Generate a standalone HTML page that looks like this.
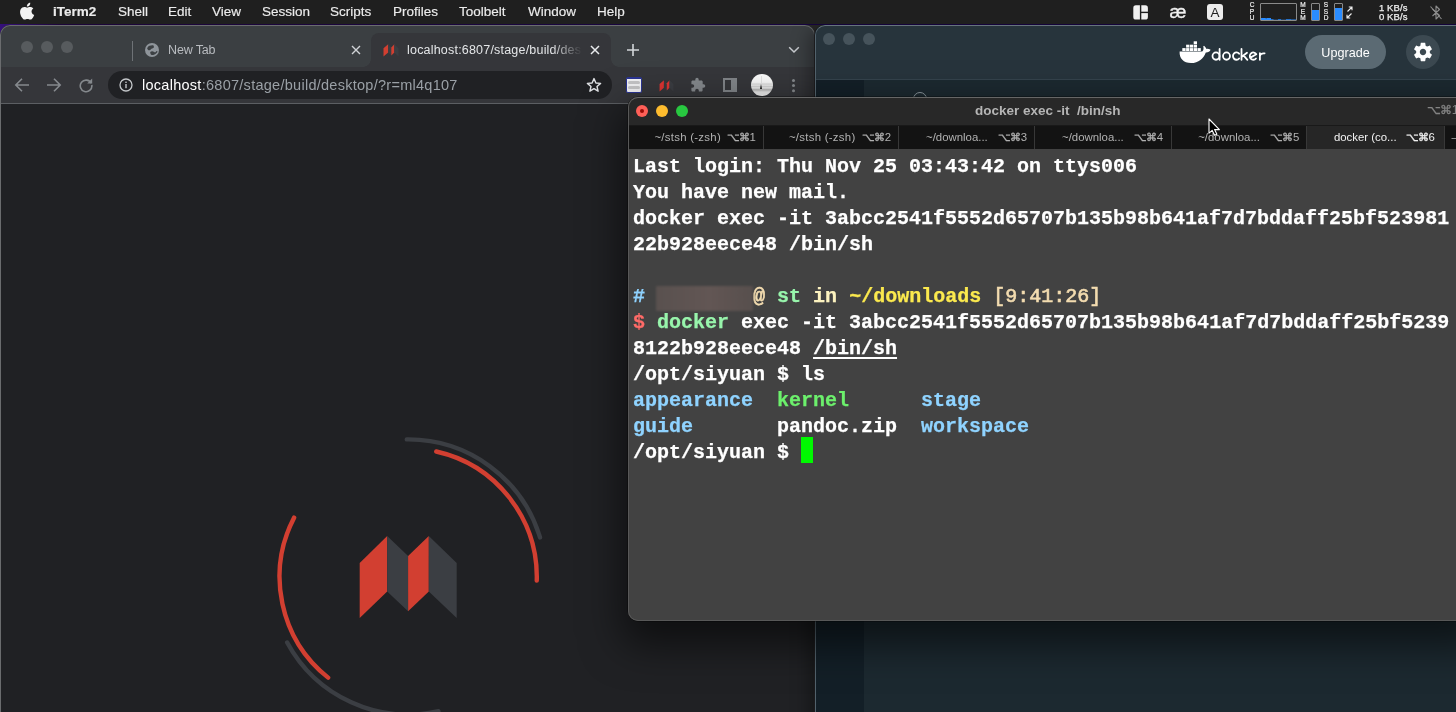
<!DOCTYPE html>
<html>
<head>
<meta charset="utf-8">
<title>screenshot</title>
<style>
*{box-sizing:border-box;margin:0;padding:0}
html,body{width:1456px;height:712px;overflow:hidden;background:#1c0740;font-family:"Liberation Sans",sans-serif;}
.abs{position:absolute}
#menubar,#chrome,#docker,#iterm .clip{will-change:transform}
#desk{position:absolute;left:0;top:0;width:1456px;height:712px;overflow:hidden;background:linear-gradient(90deg,#35107a 0px,#1c0638 60px,#170540 800px,#170540 1456px);}
/* menu bar */
#menubar{position:absolute;left:0;top:0;width:1456px;height:24px;background:#1f1f1f;color:#fff;font-size:13.5px;line-height:24px;white-space:nowrap;z-index:50}
#menubar .mi{position:absolute;top:0;height:24px;line-height:23px;color:#ececec;-webkit-text-stroke:0.150px #ececec}
.vlab{font-size:6.500px;line-height:6.600px;-webkit-text-stroke:0.200px #f0f0f0;color:#f0f0f0;width:10px;text-align:center}
/* chrome */
#chrome{position:absolute;left:0;top:25px;width:814.500px;height:700px;background:#3b3f42;border-radius:10px 10px 0 0;overflow:hidden;box-shadow:0 0 0 0 #000;z-index:1}
#chrome .rim{position:absolute;left:0;top:0;right:0;bottom:0;border-radius:10px 10px 0 0;border:1px solid #6a6c6e;border-bottom:none;z-index:9;pointer-events:none}
#tabstrip{position:absolute;left:0;top:0;width:815px;height:42px;background:#3b3f42}
#toolbar{position:absolute;left:0;top:42px;width:815px;height:36px;background:#35363a}
#tbline{position:absolute;left:0;top:78px;width:815px;height:1px;background:#5c5f63}
#page{position:absolute;left:0;top:79px;width:815px;height:640px;background:#202124}
.tl{position:absolute;width:12px;height:12px;border-radius:50%}
/* docker */
#docker{position:absolute;left:815px;top:25px;width:660px;height:700px;background:#1c2930;border-radius:10px 0 0 0;overflow:hidden;z-index:2;box-shadow:-1px 0 0 0 #1b1b1d,-6px 4px 18px rgba(0,0,0,.35)}
#docker .rim{position:absolute;left:0;top:0;right:-2px;bottom:-2px;border-radius:10px 0 0 0;border:1px solid #52626c;border-top-color:#66747c;z-index:9;pointer-events:none}
#dhead{position:absolute;left:0;top:0;width:660px;height:55px;background:#27343c;border-bottom:1px solid #34434c}
#dside{position:absolute;left:0;top:55px;width:49px;height:660px;background:#131f27}
/* iterm */
#iterm{position:absolute;left:628px;top:97px;width:850px;height:524px;background:#424242;border-radius:10px 0 0 10px;z-index:5;box-shadow:0 18px 40px 6px rgba(0,0,0,.55),0 0 0 .5px rgba(0,0,0,.6)}
#iterm .clip{position:absolute;left:0;top:0;right:0;bottom:0;border-radius:10px 0 0 10px;overflow:hidden}
#ititle{position:absolute;left:0;top:0;width:850px;height:28px;background:#282828}
#itabs{position:absolute;left:0;top:28px;width:850px;height:24px;background:#131313;box-shadow:inset 0 1px 0 #191919}
#term{position:absolute;left:5px;top:57px;font-family:"Liberation Mono",monospace;font-weight:bold;font-size:20px;line-height:26px;color:#fff;white-space:pre;letter-spacing:0;-webkit-text-stroke:0.250px currentColor}

.itab{position:absolute;top:1px;height:23px;line-height:23px !important;font-size:11.400px;line-height:25px;white-space:nowrap;border-right:1px solid #383838}
.itab .tn{position:absolute;left:26.600px;top:0}
.itab .tk{position:absolute;left:98.500px;top:0;letter-spacing:0.200px}
.cb{color:#8fd3ff}.cw{color:#f3dcb0}.cg{color:#98f5ac}.cy{color:#fbe94e}.cy2{color:#fdf3c0}.cr{color:#ff6b68}.cgg{color:#6cf06c}
.sym{font-size:10.500px;letter-spacing:-1px;margin-right:0.800px;-webkit-text-stroke:0.300px currentColor}
.n{font-weight:normal;-webkit-text-stroke:0.650px currentColor}
.u{text-decoration:underline;text-decoration-thickness:1.500px;text-underline-offset:3px}
.cur{display:inline-block;width:12px;height:25.200px;vertical-align:top;position:relative;top:-2.700px;background:#00f900;-webkit-text-stroke:0}
.blur{display:inline-block;width:97px;height:25px;margin-left:-1.500px;margin-right:0.500px;position:relative;top:1.500px;vertical-align:top;background:linear-gradient(90deg,#59514f,#625654 55%,#574f4d);filter:blur(1.200px)}
.irim{position:absolute;left:0;top:0;right:-2px;bottom:0;border-radius:10px 0 0 10px;border:1px solid #585858;border-top-color:#666;pointer-events:none}
</style>
</head>
<body>
<div id="desk">

<div id="menubar">
  <span class="mi" style="left:53px;font-weight:bold">iTerm2</span>
  <span class="mi" style="left:118px">Shell</span>
  <span class="mi" style="left:168px">Edit</span>
  <span class="mi" style="left:212px">View</span>
  <span class="mi" style="left:262px">Session</span>
  <span class="mi" style="left:330px">Scripts</span>
  <span class="mi" style="left:393px">Profiles</span>
  <span class="mi" style="left:459px">Toolbelt</span>
  <span class="mi" style="left:528px">Window</span>
  <span class="mi" style="left:597px">Help</span>
  <!-- apple logo -->
  <svg class="abs" style="left:18.300px;top:1.600px" width="16.800" height="18" viewBox="0 0 16 18" preserveAspectRatio="none"><path fill="#f2f2f2" d="M12.9 9.6c0-2 1.6-2.9 1.7-3-0.9-1.4-2.400-1.600-2.900-1.600-1.200-0.100-2.400 0.700-3.000 0.700-0.600 0-1.600-0.700-2.600-0.700C4.700 5.000 3.400 5.800 2.700 7.000c-1.500 2.600-0.400 6.400 1.100 8.500 0.700 1.000 1.500 2.200 2.600 2.100 1.000 0 1.400-0.700 2.700-0.700 1.200 0 1.600 0.700 2.700 0.600 1.100 0 1.800-1.000 2.500-2.100 0.800-1.200 1.100-2.300 1.100-2.400-0.000 0-2.500-0.900-2.500-3.400zM10.900 3.400c0.600-0.700 0.900-1.600 0.800-2.600-0.800 0-1.800 0.500-2.400 1.200-0.500 0.600-1.000 1.600-0.800 2.500 0.900 0.100 1.800-0.400 2.400-1.100z"/></svg>
  <!-- layout icon -->
  <svg class="abs" style="left:1133px;top:5px" width="16" height="15" viewBox="0 0 16 15"><rect x="0.300" y="0.300" width="14.600" height="14.200" rx="2.600" fill="#f0f0f0"/><rect x="6.900" y="0" width="1.400" height="15" fill="#1f1f1f"/><rect x="7.500" y="6.700" width="8" height="1.400" fill="#1f1f1f"/></svg>
  <span class="abs" style="left:1169.500px;top:1px;height:24px;line-height:22px;font-size:19px;color:#f0f0f0;-webkit-text-stroke:0.350px #f0f0f0">æ</span>
  <div class="abs" style="left:1207px;top:4px;width:16px;height:16px;border-radius:3px;background:#ececec;color:#1f1f1f;font-size:13.5px;line-height:17px;text-align:center">A</div>
  <!-- stats -->
  <div class="abs vlab" style="left:1247px;top:2.300px">C<br>P<br>U</div>
  <div class="abs" style="left:1260px;top:3px;width:37px;height:18px;border:1px solid #8a8a8a;border-radius:1px"></div>
  <svg class="abs" style="left:1261px;top:4px" width="35" height="16" viewBox="0 0 35 16"><path fill="#2a8cff" d="M0 16V14h4.500v0.300h1.500V14h4v1.200h2.500v0.500H17v-0.500h3v0.500h5v-0.500h5v0.300h5V16z"/></svg>
  <div class="abs vlab" style="left:1298px;top:2.300px">M<br>E<br>M</div>
  <div class="abs" style="left:1311px;top:3px;width:9px;height:18px;border:1px solid #8a8a8a;border-radius:1px"><div style="position:absolute;left:0;right:0;bottom:0;height:10px;background:#2a8cff"></div></div>
  <div class="abs vlab" style="left:1321px;top:2.300px">S<br>S<br>D</div>
  <div class="abs" style="left:1334px;top:3px;width:9px;height:18px;border:1px solid #8a8a8a;border-radius:1px"><div style="position:absolute;left:0;right:0;bottom:0;height:12px;background:#2a8cff"></div></div>
  <svg class="abs" style="left:1345px;top:6px" width="9" height="13" viewBox="0 0 9 13"><g stroke="#eee" stroke-width="1.100" fill="none"><path d="M2.500 5.500L7 1M3.800 1H7V4.200"/><path d="M6.500 7.500L2 12M2 8.800V12H5.200"/></g></svg>
  <div class="abs" style="left:1370px;top:2.600px;width:37.500px;text-align:right;font-size:9.500px;line-height:9px;color:#f0f0f0;letter-spacing:0.100px;-webkit-text-stroke:0.250px #f0f0f0">1 KB/s<br>0 KB/s</div>
  <svg class="abs" style="left:1429px;top:4px" width="14" height="17" viewBox="0 0 14 17"><g stroke="#8c8c8c" stroke-width="1.100" fill="none" stroke-linejoin="round"><path d="M3.500 5l7 6.500-3.500 3.500V2l3.500 3.500-7 6.500"/><path d="M1.500 2.500L12.500 15"/></g></svg>

</div>

<div id="chrome">
  <div id="tabstrip">
    <div class="tl" style="left:21px;top:16px;background:#575b5e"></div>
    <div class="tl" style="left:41px;top:16px;background:#575b5e"></div>
    <div class="tl" style="left:61px;top:16px;background:#575b5e"></div>
    <!-- hovered/inactive tab -->
    <div class="abs" style="left:132px;top:16px;width:1px;height:20px;background:#6e7276"></div>
    <svg class="abs" style="left:145px;top:18px" width="14" height="14" viewBox="0 0 16 16"><circle cx="8" cy="8" r="8" fill="#8f959b"/><path fill="#3c4043" d="M2.400 6.200C3 4.600 4 3.600 5.200 3.200 6.500 2.700 8 2.400 9.200 2.600 10.400 3.400 10.400 4.900 9.600 5.800 8.800 6.500 7.600 6.500 6.800 7 6.200 7.500 5.800 8 5.200 8.300 4.400 8.500 3.700 8.200 3.300 7.600 3 7 2.700 6.600 2.400 6.200ZM6 10.200C6.800 9.700 7.600 9.300 8.400 9.400 9.600 9.600 10.500 10.700 11.600 10.600 12.300 10.400 12.700 9.400 13.300 9 13.800 9 14.200 9.400 14.400 9.800 13.800 11.400 12.400 12.500 10.800 13.100 9.800 13.600 8.600 13.900 7.600 13.800 6.900 13.500 6.500 12.900 6.300 12.200 6.100 11.500 5.800 10.800 6 10.200Z"/></svg>
    <span class="abs" style="left:168px;top:16px;font-size:12.500px;line-height:18px;color:#b9bcc0;letter-spacing:-0.150px">New Tab</span>
    <svg class="abs" style="left:351px;top:20px" width="10" height="10" viewBox="0 0 10 10"><path d="M1 1l8 8M9 1l-8 8" stroke="#d0d3d6" stroke-width="1.400" fill="none"/></svg>
    <!-- active tab -->
    <div class="abs" style="left:371px;top:8px;width:240px;height:34px;background:#35363a;border-radius:8px 8px 0 0"></div>
    <div class="abs" style="left:363px;top:34px;width:8px;height:8px;background:radial-gradient(circle at 0 0,rgba(0,0,0,0) 7.500px,#35363a 8px)"></div>
    <div class="abs" style="left:611px;top:34px;width:8px;height:8px;background:radial-gradient(circle at 100% 0,rgba(0,0,0,0) 7.500px,#35363a 8px)"></div>
    <svg class="abs" style="left:383px;top:19px" width="16" height="13" viewBox="0 0 16 13"><path fill="#d23f31" d="M0.500 4.200L5.200 0.300V8.500L0.500 12.500z"/><path fill="#3b3e43" d="M5.200 0.300L8.300 3.500V11.500L5.200 8.500z"/><path fill="#d23f31" d="M8.300 3.500L11.300 0.300V8.500L8.300 11.500z"/><path fill="#3b3e43" d="M11.300 0.300L15.500 4.200V12.500L11.300 8.500z"/></svg>
    <div class="abs" style="left:407px;top:16px;width:175px;height:18px;overflow:hidden;font-size:12.500px;line-height:18px;color:#e4e6e8;white-space:nowrap;letter-spacing:0.200px">localhost:6807/stage/build/desktop/?r=ml4q107</div>
    <div class="abs" style="left:552px;top:16px;width:30px;height:18px;background:linear-gradient(90deg,rgba(53,54,58,0),#35363a)"></div>
    <svg class="abs" style="left:590px;top:20px" width="10" height="10" viewBox="0 0 10 10"><path d="M1 1l8 8M9 1l-8 8" stroke="#e8eaed" stroke-width="1.500" fill="none"/></svg>
    <svg class="abs" style="left:626px;top:18px" width="14" height="14" viewBox="0 0 14 14"><path d="M7 1v12M1 7h12" stroke="#d4d7da" stroke-width="1.600" fill="none"/></svg>
    <svg class="abs" style="left:788px;top:21px" width="12" height="8" viewBox="0 0 12 8"><path d="M1.200 1.200L6 6l4.800-4.800" stroke="#c8cbcf" stroke-width="1.500" fill="none"/></svg>
  </div>
  <div id="toolbar">
    <svg class="abs" style="left:14px;top:10px" width="16" height="16" viewBox="0 0 16 16"><path d="M15 8H2.500M8 1.800L1.800 8 8 14.200" stroke="#85898d" stroke-width="1.600" fill="none"/></svg>
    <svg class="abs" style="left:46px;top:10px" width="16" height="16" viewBox="0 0 16 16"><path d="M1 8h12.500M8 1.800L14.200 8 8 14.200" stroke="#85898d" stroke-width="1.600" fill="none"/></svg>
    <svg class="abs" style="left:78px;top:10px" width="16" height="16" viewBox="0 0 16 16"><path d="M13.200 6.200A5.800 5.800 0 1 0 13.800 8" stroke="#85898d" stroke-width="1.600" fill="none"/><path d="M14.200 1.500v5h-5z" fill="#85898d"/></svg>
    <div class="abs" style="left:108px;top:4px;width:504px;height:28px;border-radius:14px;background:#202124"></div>
    <svg class="abs" style="left:119px;top:11px" width="14" height="14" viewBox="0 0 14 14"><circle cx="7" cy="7" r="6" stroke="#c4c7ca" stroke-width="1.300" fill="none"/><rect x="6.300" y="6" width="1.400" height="4.200" fill="#c4c7ca"/><rect x="6.300" y="3.600" width="1.400" height="1.400" fill="#c4c7ca"/></svg>
    <span class="abs" style="left:142px;top:8px;font-size:14.500px;line-height:20px;color:#fff;white-space:nowrap;letter-spacing:0.270px">localhost<span style="color:#9aa0a6">:6807/stage/build/desktop/?r=ml4q107</span></span>
    <svg class="abs" style="left:586px;top:10px" width="16" height="16" viewBox="0 0 16 16"><path d="M8 1.600l1.900 4.400 4.700 0.400-3.600 3.100 1.100 4.700L8 11.700l-4.100 2.500 1.100-4.700L1.400 6.400l4.700-0.400z" stroke="#dfe1e4" stroke-width="1.400" fill="none" stroke-linejoin="round"/></svg>
    <!-- ext 1 -->
    <div class="abs" style="left:626px;top:10px;width:16px;height:16px;background:#f1f1f3;border:1.300px solid #2a3492;border-top-width:2.200px;border-bottom-width:1.600px;border-radius:2px"><div style="position:absolute;left:1.200px;right:1.200px;top:2.200px;height:3.200px;background:#c4c4c6;border-radius:1.500px"></div><div style="position:absolute;left:1.200px;right:1.200px;top:7.200px;height:3.200px;background:#c4c4c6;border-radius:1.500px"></div></div>
    <svg class="abs" style="left:658.500px;top:12.500px" width="15" height="12" viewBox="0 0 16 13"><path fill="#dc3432" d="M0.500 4.200L5.200 0.300V8.500L0.500 12.500z"/><path fill="#37393d" d="M5.200 0.300L8.300 3.500V11.500L5.200 8.500z"/><path fill="#dc3432" d="M8.300 3.500L11.300 0.300V8.500L8.300 11.500z"/><path fill="#3b3d42" d="M11.300 0.300L15.500 4.200V12.500L11.300 8.500z"/></svg>
    <svg class="abs" style="left:690px;top:10px" width="16" height="16" viewBox="0 0 16 16"><path fill="#84888c" d="M13.700 7.300h-1V4.700c0-0.700-0.600-1.300-1.300-1.300H8.700v-1a1.700 1.700 0 0 0-3.400 0v1H2.700c-0.700 0-1.300 0.600-1.300 1.300v2.500h1a1.800 1.800 0 0 1 0 3.600h-1v2.500c0 0.700 0.600 1.300 1.300 1.300h2.500v-1a1.800 1.800 0 0 1 3.600 0v1h2.500c0.700 0 1.300-0.600 1.300-1.300v-2.600h1a1.700 1.700 0 0 0 0-3.400z"/></svg>
    <div class="abs" style="left:723px;top:11px;width:14px;height:14px;border:2px solid #808488;border-right-width:6px"></div>
    <div class="abs" style="left:751px;top:7px;width:22px;height:22px;border-radius:50%;background:linear-gradient(180deg,#fbfbfb 0%,#f7f7f7 38%,#dadada 46%,#ececec 51%,#d2d2d2 57%,#ececec 63%,#b8b8b8 71%,#c6c6c6 75%,#e8e8e8 82%,#f3f3f3 100%);overflow:hidden"><div style="position:absolute;left:10px;top:2px;width:1px;height:8px;background:#e2e2e2"></div><div style="position:absolute;left:9.200px;top:9.600px;width:0;height:0;border-left:1.400px solid transparent;border-right:1.400px solid transparent;border-bottom:5.400px solid #1c1c1c"></div></div>
    <div class="abs" style="left:792.300px;top:11.500px;width:3px;height:3px;border-radius:50%;background:#85898d;box-shadow:0 5.100px 0 #85898d,0 10.200px 0 #85898d"></div>
  </div>
  <div id="tbline"></div>
  <div id="page">
    <svg class="abs" style="left:0;top:0" width="815" height="608" viewBox="0 0 815 608">
      <g fill="none" stroke-linecap="round" stroke-width="4.400">
        <path stroke="#3b3e43" d="M406.76 335.41A137.6 137.6 0 0 1 540.00 433.46"/>
        <path stroke="#3b3e43" d="M438.45 607.23A137.6 137.6 0 0 1 287.16 538.45"/>
        <path stroke="#d23f31" d="M436.25 347.50A128.6 128.6 0 0 1 536.75 476.59"/>
        <path stroke="#d23f31" d="M328.14 573.64A128.6 128.6 0 0 1 294.13 413.62"/>
      </g>
      <g transform="translate(0,-104)">
        <path fill="#d23f31" d="M359.700 563L387.200 536V591.600L359.700 618Z"/>
        <path fill="#3b3e43" d="M387.200 536L408.100 555.900V611.300L387.200 591.600Z"/>
        <path fill="#d23f31" d="M408.100 555.900L428.800 536V591.600L408.100 611.300Z"/>
        <path fill="#3b3e43" d="M428.800 536L456.700 563V618L428.800 591.600Z"/>
      </g>
    </svg>
  </div>
  <div class="rim"></div>
</div>

<div class="abs" style="left:790px;top:25px;width:50px;height:20px;background:#272727"></div>
<div id="docker">
  <div id="dhead">
    <div class="tl" style="left:8px;top:8px;background:#46535b"></div>
    <div class="tl" style="left:28px;top:8px;background:#46535b"></div>
    <div class="tl" style="left:48px;top:8px;background:#46535b"></div>
    <!-- docker logo -->
    <svg class="abs" style="left:360px;top:11px" width="100" height="32" viewBox="0 0 100 32">
      <g fill="#fff"><rect x="7.3" y="12.100" width="3.300" height="2.900"/><rect x="11.1" y="12.100" width="3.300" height="2.900"/><rect x="14.9" y="12.100" width="3.300" height="2.900"/><rect x="18.7" y="12.100" width="3.300" height="2.900"/><rect x="22.5" y="12.100" width="3.300" height="2.900"/><rect x="11.1" y="8.700" width="3.300" height="2.900"/><rect x="14.9" y="8.700" width="3.300" height="2.900"/><rect x="18.7" y="8.700" width="3.300" height="2.900"/><rect x="18.700" y="5.300" width="3.300" height="2.900"/>
        <path d="M4.600 15.600H27.200C28.600 14.600 28.900 12.200 28.200 10.600L29 9.700C30.200 10.500 31 11.600 31.100 12.800 32.600 12.500 34.200 12.800 35.600 13.700 34.800 15.600 33 16.600 30.800 16.500 28.600 22.600 23.600 27.100 16 27.100 8.500 27.100 4.200 22.500 4.600 15.600Z"/>
      </g>
      <g fill="none" stroke="#fff" stroke-width="1.800" stroke-linecap="round" stroke-linejoin="round">
        <ellipse cx="41" cy="20.100" rx="3.500" ry="3.650"/><path d="M44.600 13V23.800"/>
        <ellipse cx="51.500" cy="20.100" rx="3.500" ry="3.650"/>
        <path d="M64.100 17.700A3.500 3.650 0 1 0 64.100 22.500"/>
        <path d="M66.500 13V23.800M66.800 20.800L72 16.800M68.700 19.600L72.400 23.800"/>
        <path d="M75.400 21.600L81.330 18.280A3.500 3.650 0 1 0 80.980 22.450"/>
        <path d="M84.900 17.200V23.800M84.900 20.200C84.900 18.300 87 16.900 89.600 17.400"/>
      </g>
    </svg>
    <div class="abs" style="left:490px;top:10px;width:81px;height:34px;border-radius:17px;background:#5b6a73;color:#fff;font-size:12.600px;line-height:36px;text-align:center">Upgrade</div>
    <div class="abs" style="left:591px;top:10px;width:34px;height:34px;border-radius:50%;background:#3c4951"></div>
    <svg class="abs" style="left:597px;top:16px" width="22" height="22" viewBox="0 0 24 24"><path fill="#fff" d="M19.430 12.980c0.040-0.320 0.070-0.640 0.070-0.980s-0.030-0.660-0.070-0.980l2.110-1.650c0.190-0.150 0.240-0.420 0.120-0.640l-2-3.460c-0.120-0.220-0.390-0.300-0.610-0.220l-2.490 1c-0.520-0.400-1.080-0.730-1.690-0.980l-0.380-2.650C14.460 2.180 14.250 2 14 2h-4c-0.250 0-0.460 0.180-0.490 0.420l-0.380 2.650c-0.610 0.250-1.170 0.590-1.690 0.980l-2.490-1c-0.230-0.090-0.490 0-0.610 0.220l-2 3.460c-0.130 0.220-0.070 0.490 0.120 0.640l2.110 1.650c-0.040 0.320-0.070 0.650-0.070 0.980s0.030 0.660 0.070 0.980l-2.110 1.650c-0.190 0.150-0.240 0.420-0.120 0.640l2 3.460c0.120 0.220 0.390 0.300 0.610 0.220l2.490-1c0.520 0.400 1.080 0.730 1.690 0.980l0.380 2.650c0.030 0.240 0.240 0.420 0.490 0.420h4c0.250 0 0.460-0.180 0.490-0.420l0.380-2.650c0.610-0.250 1.170-0.590 1.690-0.980l2.490 1c0.230 0.090 0.490 0 0.610-0.220l2-3.460c0.120-0.220 0.070-0.490-0.120-0.640l-2.110-1.650zM12 15.500c-1.930 0-3.500-1.570-3.500-3.500s1.570-3.500 3.500-3.500 3.500 1.570 3.500 3.500-1.570 3.500-3.500 3.500z"/></svg>
  </div>
  <div id="dside"></div>
  <div class="abs" style="left:97.500px;top:67px;width:14px;height:14px;border-radius:50%;border:1px solid #8b979e"></div>
  <div class="rim"></div>
</div>

<div id="iterm">
  <div class="clip">
    <div id="ititle">
      <div class="tl" style="left:8px;top:8px;background:#fe5f57"><div style="position:absolute;left:4px;top:4px;width:4px;height:4px;border-radius:50%;background:#990a05"></div></div>
      <div class="tl" style="left:28px;top:8px;background:#febc2e"></div>
      <div class="tl" style="left:48px;top:8px;background:#28c840"></div>
      <div class="abs" style="left:299.800px;top:0;width:240px;text-align:center;font-size:13.500px;font-weight:bold;line-height:28px;color:#b5b5b5;white-space:pre">docker exec -it  /bin/sh</div>
      <div class="abs" style="left:799px;top:0;font-size:12.500px;line-height:26px;color:#848484;white-space:nowrap"><span class="sym" style="font-size:11.500px">⌥⌘</span>1</div>
    </div>
    <div id="itabs">
<div class="itab" style="left:1.0px;width:134.5px;color:#b2b2b2"><span class="tn" style="left:25.400px;letter-spacing:0.280px">~/stsh (-zsh)</span><span class="tk" style="left:98px"><span class="sym" style="letter-spacing:-1.100px">⌥⌘</span>1</span></div>
<div class="itab" style="left:135.5px;width:135.9px;color:#b2b2b2"><span class="tn" style="left:25.400px;letter-spacing:0.280px">~/stsh (-zsh)</span><span class="tk"><span class="sym">⌥⌘</span>2</span></div>
<div class="itab" style="left:271.4px;width:136.0px;color:#b2b2b2"><span class="tn">~/downloa...</span><span class="tk"><span class="sym">⌥⌘</span>3</span></div>
<div class="itab" style="left:407.4px;width:136.2px;color:#b2b2b2"><span class="tn">~/downloa...</span><span class="tk"><span class="sym">⌥⌘</span>4</span></div>
<div class="itab" style="left:543.6px;width:135.7px;color:#b2b2b2"><span class="tn">~/downloa...</span><span class="tk"><span class="sym">⌥⌘</span>5</span></div>
<div class="itab" style="left:679.3px;width:138.3px;background:#262626;border-left:1px solid #383838;margin-left:-1px;color:#f2f2f2"><span class="tn">docker (co...</span><span class="tk"><span class="sym">⌥⌘</span>6</span></div>
<div class="itab" style="left:817.6px;width:136.4px;color:#b2b2b2"><span class="tn" style="left:6px">–</span><span class="tk"><span class="sym">⌥⌘</span>7</span></div>
    </div>
    <div id="term">Last login: Thu Nov 25 03:43:42 on ttys006
You have new mail.
docker exec -it 3abcc2541f5552d65707b135b98b641af7d7bddaff25bf523981
22b928eece48 /bin/sh

<span class="cb">#</span> <span class="blur">        </span><span class="cw n">@</span> <span class="cg">st</span> <span class="cy2">in</span> <span class="cy">~/downloads</span> <span class="cw n">[9:41:26]</span>
<span class="cr">$</span> <span class="cg">docker</span> exec -it 3abcc2541f5552d65707b135b98b641af7d7bddaff25bf5239
8122b928eece48 <span class="u">/bin/sh</span>
/opt/siyuan $ ls
<span class="cb">appearance</span>  <span class="cgg">kernel</span>      <span class="cb">stage</span>
<span class="cb">guide</span>       pandoc.zip  <span class="cb">workspace</span>
/opt/siyuan $ <span class="cur"> </span></div>
  </div>
  <div class="irim"></div>
</div>

<svg class="abs" style="left:1207px;top:117px;z-index:60" width="16" height="20" viewBox="-2 -2 16 20"><path d="M0 0V14.200L3.200 11.400L5.600 16.300L7.900 15.300L5.600 10.600H10.400Z" fill="#000" stroke="#fff" stroke-width="1.100" stroke-linejoin="round"/></svg>
</div>
</body>
</html>
